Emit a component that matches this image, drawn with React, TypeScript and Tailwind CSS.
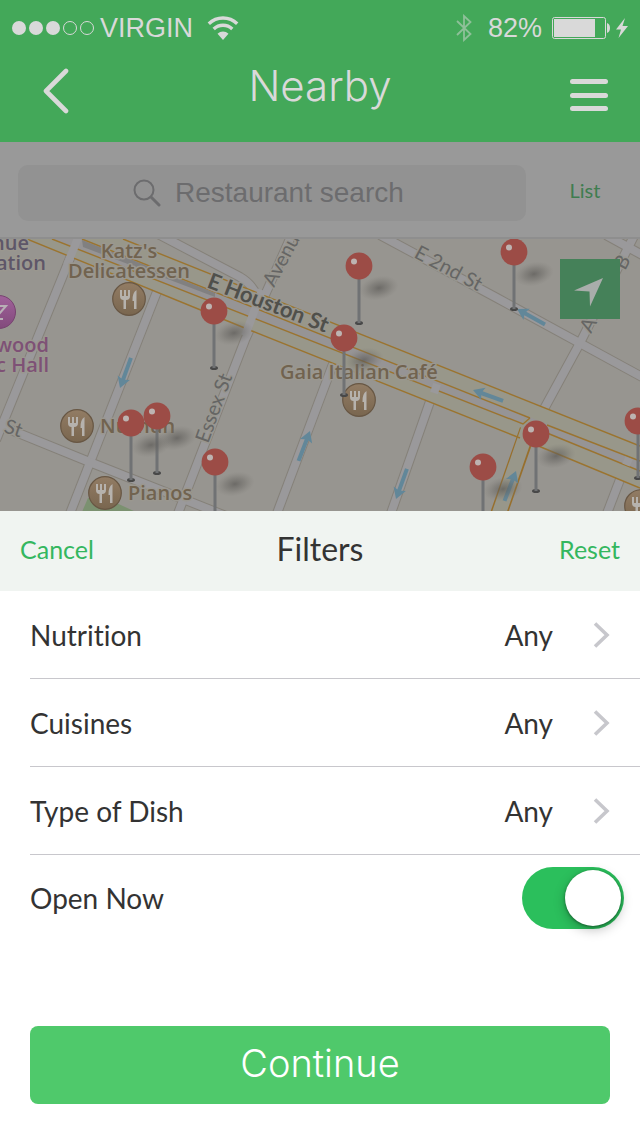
import { useState } from "react";

const pins = [
  [359, 266], [514, 252], [214, 311], [344, 338], [157, 416],
  [131, 423], [215, 462], [536, 434], [483, 467], [638, 421],
];

const restaurants = [[129, 299], [77, 426], [105, 493], [359, 400], [641, 506]];

const streets = [
  "M79 236 L-4 440",
  "M160 284 L69 516",
  "M-4 424 L92 463 L226 516",
  "M293 232 L245 340 L177 516",
  "M158 234 L240 277 Q252 284 257 296",
  "M336 356 L276 516",
  "M441 370 L390 516",
  "M380 235 L497 298 L644 378",
  "M636 232 L580 343 L538 420",
  "M606 235 L644 256",
  "M629 456 L606 516",
];

const oneWayArrows = [
  { x: 120, y: 388, angle: 110 },
  { x: 310, y: 431, angle: -69 },
  { x: 396, y: 499, angle: 110 },
  { x: 517, y: 309, angle: -151 },
  { x: 473, y: 390, angle: -160 },
  { x: 516, y: 471, angle: -69 },
];

function CityMap() {
  return (
    <svg
      className="block w-full"
      viewBox="0 239 640 272"
      preserveAspectRatio="xMidYMid slice"
      role="img"
      aria-label="Map of nearby restaurants"
    >
      <defs>
        <radialGradient id="pinShadow">
          <stop offset="0" stopColor="#5a5855" stopOpacity="0.7" />
          <stop offset="0.5" stopColor="#686662" stopOpacity="0.4" />
          <stop offset="1" stopColor="#7c7974" stopOpacity="0" />
        </radialGradient>
        <linearGradient id="badge" x1="0" y1="0" x2="0" y2="1">
          <stop offset="0" stopColor="#927c64" />
          <stop offset="1" stopColor="#79664f" />
        </linearGradient>
        <linearGradient id="bar" x1="0" y1="0" x2="0" y2="1">
          <stop offset="0" stopColor="#a0619a" />
          <stop offset="1" stopColor="#824a7c" />
        </linearGradient>
      </defs>
      <rect x="0" y="239" width="640" height="272" fill="#979590" />
      <path d="M82 512 L88 498 L112 501 L136 512 Z" fill="#7b9170" />

      <g fill="none">
        {streets.map((d) => (
          <path key={d} d={d} stroke="#858179" strokeWidth="10" />
        ))}
        {streets.map((d) => (
          <path key={d} d={d} stroke="#9a999b" strokeWidth="8" />
        ))}
      </g>

      <path d="M27 239 L123 239 L640 446 L640 488 Z" fill="#98978a" />
      <path d="M52 239 L82 239 L640 461 L640 471 Z" fill="#969495" />
      <path d="M83 247 L82 240 L215 293 L215 297 Z" fill="#818080" />
      <path d="M528 430 L498 516" stroke="#976f2c" strokeWidth="17" fill="none" />
      <path d="M531 420 L498 516" stroke="#98978a" strokeWidth="14" fill="none" />
      <g stroke="#9b742f" strokeWidth="1.4" fill="none">
        <path d="M27 239 L252 331 L520 438" />
        <path d="M536 445 L640 488" />
        <path d="M52 239 L523 424 L530 418" />
        <path d="M547 433 L640 471" />
        <path d="M82 239 L530 418" />
        <path d="M547 425 L640 461" />
        <path d="M123 239 L640 446" />
      </g>
      <g stroke="#9a999b" strokeWidth="8">
        <path d="M78 238 L67 265" />
        <path d="M262 290 L245 336" />
        <path d="M437 384 L434 393" />
        <path d="M629 458 L626 465" />
      </g>

      {oneWayArrows.map(({ x, y, angle }) => (
        <path
          key={`${x}-${y}`}
          transform={`translate(${x} ${y}) rotate(${angle})`}
          d="M0 0 L-11 -6.5 L-9.5 -2 L-32 -2 L-32 2 L-9.5 2 L-11 6.5 Z"
          fill="#628799"
        />
      ))}

      <g
        className="font-[Lato,sans-serif]"
        stroke="#98968f"
        strokeWidth="3"
        paintOrder="stroke"
        strokeLinejoin="round"
        fill="#656564"
        fontSize="20"
      >
        <text transform="translate(413 257) rotate(28)">E 2nd St</text>
        <text transform="translate(208 444) rotate(-70)">Essex St</text>
        <text transform="translate(274 288) rotate(-62)">Avenu</text>
        <text transform="translate(591 334) rotate(-62)">A</text>
        <text transform="translate(625 271) rotate(-62)">B</text>
        <text transform="translate(3 432) rotate(18)">St</text>
        <text transform="translate(206 287) rotate(21)" fontSize="22" fontWeight="700" fill="#50504b">
          E Houston St
        </text>
      </g>

      {restaurants.map(([x, y]) => (
        <g key={`${x}-${y}`} transform={`translate(${x} ${y})`}>
          <circle r="16.3" fill="url(#badge)" stroke="#685744" strokeWidth="1.2" />
          <path
            d="M-9 -9 V-3 Q-9 1 -5.500 1 V10 H-3 V1 Q1 1 1 -3 V-9 H-1 V-3 H-3 V-9 H-5 V-3 H-7 V-9 Z M7.500 -9 Q3 -6 3.500 2 H5 V10 H7.500 Z"
            fill="#b6b2ad"
          />
        </g>
      ))}
      <circle cx="-1" cy="312" r="16.5" fill="url(#bar)" stroke="#774370" strokeWidth="1" />
      <path d="M-8 306 H6 L-1 314 V319 H3" fill="none" stroke="#b8afb6" strokeWidth="2" />

      <g
        className="font-['Open_Sans',sans-serif]"
        stroke="#9a978f"
        strokeWidth="3"
        paintOrder="stroke"
        strokeLinejoin="round"
        fill="#71634f"
        fontSize="20"
        fontWeight="600"
      >
        <text x="129" y="258" textAnchor="middle">Katz's</text>
        <text x="129" y="278" textAnchor="middle">Delicatessen</text>
        <text x="359" y="379" textAnchor="middle">Gaia Italian Café</text>
        <text x="100" y="433">Nurhun</text>
        <text x="128" y="500">Pianos</text>
        <g textAnchor="end" fill="#5e5668">
          <text x="29" y="250">nue</text>
          <text x="46" y="270">ation</text>
        </g>
        <g textAnchor="end" fill="#7e5176">
          <text x="49" y="352">wood</text>
          <text x="49" y="372">c Hall</text>
        </g>
      </g>

      {pins.map(([x, y]) => (
        <g key={`${x}-${y}`} transform={`translate(${x} ${y})`}>
          <ellipse cx="20" cy="22" rx="20" ry="12" transform="rotate(-12 20 22)" fill="url(#pinShadow)" />
          <ellipse cy="57" rx="4" ry="2" fill="#484848" />
          <rect x="-1.5" y="11" width="3" height="46" fill="#707274" />
          <circle r="13.4" fill="#9c4c46" />
          <circle cx="-5" cy="-4.500" r="3" fill="#bdb3b1" />
        </g>
      ))}
    </svg>
  );
}

function StatusBar() {
  return (
    <div className="flex h-14 items-center justify-between px-3 font-['Liberation_Sans',sans-serif] text-[27px] leading-8">
      <div className="flex items-center">
        <svg width="82" height="16" viewBox="0 0 82 16" aria-hidden="true">
          <g fill="currentColor">
            <circle cx="7" cy="8" r="7" />
            <circle cx="24" cy="8" r="7" />
            <circle cx="41" cy="8" r="7" />
          </g>
          <g fill="none" stroke="currentColor">
            <circle cx="58" cy="8" r="6.500" />
            <circle cx="75" cy="8" r="6.500" />
          </g>
        </svg>
        <span className="ml-1.5">VIRGIN</span>
        <svg className="ml-3.5" width="32" height="26" viewBox="0 0 32 26" aria-hidden="true">
          <g fill="none" stroke="currentColor" strokeWidth="3.4">
            <path d="M1.800 8.700 A20.500 20.500 0 0 1 30.200 8.700" />
            <path d="M6.700 14 A13.400 13.400 0 0 1 25.300 14" />
          </g>
          <path d="M10.500 18.700 A8 8 0 0 1 21.500 18.700 L16 25 Z" fill="currentColor" />
        </svg>
      </div>
      <div className="flex items-center">
        <svg className="opacity-50" width="16" height="28" viewBox="0 0 16 28" aria-hidden="true">
          <path
            d="M1 7 L14.500 20 L8 26 V2 L14.500 8 L1 21"
            fill="none"
            stroke="currentColor"
            strokeWidth="1.8"
          />
        </svg>
        <span className="ml-4">82%</span>
        <svg className="ml-2.5" width="76" height="24" viewBox="0 0 76 24" aria-hidden="true">
          <rect x="0.500" y="1.500" width="53" height="21" rx="2" fill="none" stroke="currentColor" />
          <rect x="2" y="3" width="41" height="18" fill="currentColor" />
          <path d="M55 7 Q58 8 58 12 Q58 16 55 17 Z M73 2 L64 13.500 H69 L66.500 22 L76 10 H70.500 Z" fill="currentColor" />
        </svg>
      </div>
    </div>
  );
}

function FilterRow({ label, value }: { label: string; value: string }) {
  return (
    <li className="ml-[30px] h-[88px] border-b border-[#c8c7cc]">
      <button type="button" className="flex h-full w-full items-center pr-[30px] text-left">
        <span className="flex-1">{label}</span>
        <span>{value}</span>
        <svg className="ml-10" width="17" height="26" viewBox="0 0 17 26" fill="none" aria-hidden="true">
          <path d="M2 1.500 L14 13 L2 24.500" stroke="#c7c7cc" strokeWidth="3.6" />
        </svg>
      </button>
    </li>
  );
}

export default function App() {
  const [openNow, setOpenNow] = useState(true);

  return (
    <div className="flex min-h-screen flex-col bg-white font-[Lato,sans-serif] text-[#333333] [font-variant-ligatures:none]">
      <header className="h-[142px] bg-[#43a859] text-[#d9d9d9]">
        <StatusBar />
        <div className="grid h-16 grid-cols-[1fr_auto_1fr] items-start px-8">
          <button type="button" aria-label="Back" className="ml-2.5 mt-3 w-8">
            <svg width="32" height="46" viewBox="0 0 32 46" fill="none" aria-hidden="true">
              <path d="M24 3 L4 23 L24 43" stroke="currentColor" strokeWidth="4.6" strokeLinecap="round" strokeLinejoin="round" />
            </svg>
          </button>
          <h1 className="mt-1 font-[Inter,sans-serif] text-[42px] font-light leading-[52px]">Nearby</h1>
          <button type="button" aria-label="Menu" className="mt-[22px] justify-self-end">
            <svg width="38" height="34" viewBox="0 0 38 34" aria-hidden="true">
              <g fill="currentColor">
                <rect y="1" width="38" height="5" rx="2.500" />
                <rect y="15" width="38" height="5" rx="2.500" />
                <rect y="28" width="38" height="5" rx="2.500" />
              </g>
            </svg>
          </button>
        </div>
      </header>

      <div className="flex h-[97px] items-center border-b-2 border-[#8e8e8e] bg-[#999999] pl-[18px] pt-1.5">
        <label className="flex h-14 flex-1 items-center justify-center gap-3.5 rounded-[10px] bg-[#929292] text-[#6c6c6e]">
          <svg width="28" height="28" viewBox="0 0 28 28" fill="none" stroke="currentColor" aria-hidden="true">
            <circle cx="11" cy="11" r="9.500" strokeWidth="2" />
            <path d="M18 18 L26 26" strokeWidth="3" strokeLinecap="round" />
          </svg>
          <input
            type="text"
            aria-label="Restaurant search"
            placeholder="Restaurant search"
            className="w-[236px] bg-transparent font-['Liberation_Sans',sans-serif] text-[28px] leading-8 outline-none placeholder:text-[#6c6c6e]"
          />
        </label>
        <a href="#list" className="mb-1.5 w-[114px] pl-1 text-center text-xl text-[#3f7d50]">
          List
        </a>
      </div>

      <div className="relative">
        <CityMap />
        <button
          type="button"
          aria-label="Locate me"
          className="absolute right-5 top-5 flex size-[60px] items-center justify-center bg-[#458159]"
        >
          <svg width="60" height="60" viewBox="0 0 60 60" aria-hidden="true">
            <path d="M43 19 L14 31.500 L29.500 32.500 L30 47.500 Z" fill="#a9adab" />
          </svg>
        </button>
      </div>

      <section aria-labelledby="filters-title" className="flex flex-1 flex-col text-[28px] leading-9">
        <div className="grid h-20 grid-cols-[1fr_auto_1fr] items-center bg-[#f0f4f1] px-5 pb-1">
          <button type="button" className="justify-self-start text-[25px] text-[#34b75f]">
            Cancel
          </button>
          <h2 id="filters-title" className="text-[32px] leading-10">
            Filters
          </h2>
          <button type="button" className="justify-self-end text-[25px] text-[#34b75f]">
            Reset
          </button>
        </div>
        <ul>
          <FilterRow label="Nutrition" value="Any" />
          <FilterRow label="Cuisines" value="Any" />
          <FilterRow label="Type of Dish" value="Any" />
          <li>
            <label className="flex h-[86px] items-center justify-between pl-[30px] pr-4">
              <span>Open Now</span>
              <input
                type="checkbox"
                role="switch"
                checked={openNow}
                onChange={(event) => setOpenNow(event.target.checked)}
                className="peer sr-only"
              />
              <span
                aria-hidden="true"
                className="flex h-[62px] w-[102px] items-center rounded-full bg-[#d1d1d6] p-[3px] peer-checked:justify-end peer-checked:bg-[#2bbf5c]"
              >
                <span className="size-14 rounded-full bg-white shadow-[0_4px_12px_rgba(0,0,0,0.25),0_1px_3px_rgba(0,0,0,0.4)]" />
              </span>
            </label>
          </li>
        </ul>
        <div className="mt-auto px-[30px] pb-8">
          <button
            type="button"
            className="flex h-[78px] w-full items-center justify-center rounded-lg bg-[#4fc96b] pb-1 font-[Inter,sans-serif] text-[38px] font-light text-white"
          >
            Continue
          </button>
        </div>
      </section>
    </div>
  );
}
